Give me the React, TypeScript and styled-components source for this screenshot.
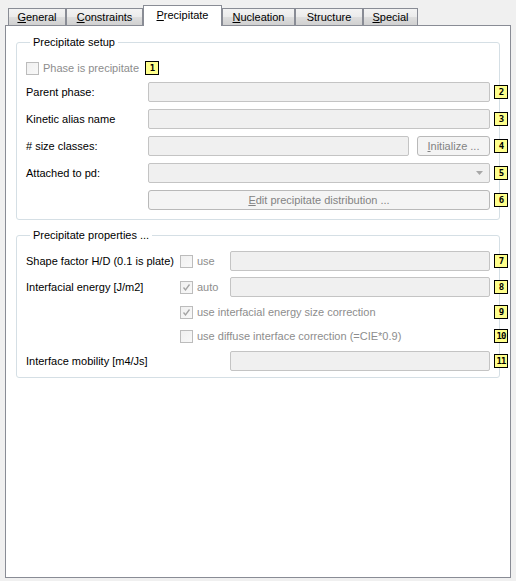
import React from "react";
import styled, { createGlobalStyle, css } from "styled-components";

const Global = createGlobalStyle`
  html, body {
    margin: 0;
    padding: 0;
    background: #f0f0f0;
  }
  body {
    font-family: "Liberation Sans", Arial, sans-serif;
    font-size: 11px;
    color: #000;
  }
  * { box-sizing: border-box; }
`;

const Window = styled.div`
  width: 516px;
  height: 581px;
  padding: 5px 5px 3px 5px;
  display: flex;
  flex-direction: column;
`;

const TabStrip = styled.div`
  display: flex;
  align-items: flex-end;
  height: 20px;
  padding-left: 3px;
  position: relative;
  z-index: 1;
`;

const Tab = styled.div<{ $active?: boolean; $w: number }>`
  width: ${(p) => p.$w}px;
  height: ${(p) => (p.$active ? 21 : 18)}px;
  margin-bottom: -1px;
  border: 1px solid #898c95;
  display: flex;
  justify-content: center;
  align-items: center;
  white-space: nowrap;
  ${(p) =>
    p.$active
      ? css`
          background: #fff;
          border-bottom: none;
          padding-bottom: 3px;
        `
      : css`
          background: linear-gradient(
            to bottom,
            #f3f3f3 0%,
            #ebebeb 50%,
            #dedede 51%,
            #d0d0d0 100%
          );
          padding-bottom: 1px;
        `}
`;

const Key = styled.span`
  text-decoration: underline;
  text-underline-offset: 1px;
`;

const Panel = styled.div`
  flex: 1;
  border: 1px solid #898c95;
  background: #fff;
  padding: 9px 10px 0 10px;
  display: flex;
  flex-direction: column;
`;

const Group = styled.fieldset<{ $top?: number; $pad: string }>`
  margin: ${(p) => p.$top ?? 0}px 0 0 0;
  padding: ${(p) => p.$pad};
  border: 1px solid #d5dfe5;
  border-radius: 3px;
  min-width: 0;
`;

const Legend = styled.legend`
  margin-left: 4px;
  padding: 0 3px;
  line-height: 14px;
  height: 14px;
`;

const Rows = styled.div<{ $gap: number }>`
  margin-right: -9px;
  display: flex;
  flex-direction: column;
  gap: ${(p) => p.$gap}px;
`;

const SetupRow = styled.div<{ $h?: number }>`
  display: grid;
  grid-template-columns: 118px 1fr 14px;
  column-gap: 4px;
  align-items: center;
  height: ${(p) => p.$h ?? 20}px;
`;

const InlineRow = styled.div`
  display: flex;
  align-items: center;
  height: 14px;
`;

const PropRow = styled.div<{ $h?: number }>`
  display: grid;
  grid-template-columns: 150px 46px 1fr 14px;
  column-gap: 4px;
  align-items: center;
  height: ${(p) => p.$h ?? 20}px;
`;

const Label = styled.span`
  white-space: nowrap;
  color: #000;
`;

const CheckLine = styled.label<{ $span?: string }>`
  display: flex;
  align-items: center;
  gap: 4px;
  white-space: nowrap;
  color: #8d8d8d;
  ${(p) => p.$span && `grid-column: ${p.$span};`}
`;

const Box = styled.span`
  width: 13px;
  height: 13px;
  flex: none;
  border: 1px solid #bcbcbc;
  background: linear-gradient(135deg, #f0f0f0, #f8f8f8);
  display: flex;
  align-items: center;
  justify-content: center;
`;

const Field = styled.div<{ $grow?: boolean }>`
  height: 20px;
  ${(p) => p.$grow && "flex: 1;"}
  border: 1px solid #c4c4c4;
  border-radius: 2px;
  background: #f0f0f0;
  display: flex;
  align-items: center;
  justify-content: flex-end;
`;

const FieldPair = styled.div`
  display: flex;
  gap: 8px;
  height: 20px;
`;

const Button = styled.div<{ $w?: number }>`
  ${(p) => (p.$w ? `width: ${p.$w}px; flex: none;` : "flex: 1;")}
  height: 20px;
  border: 1px solid #b9b9b9;
  border-radius: 3px;
  background: #f4f4f4;
  color: #838383;
  display: flex;
  align-items: center;
  justify-content: center;
  white-space: nowrap;
`;

const Badge = styled.span<{ $gapLeft?: number }>`
  width: 14px;
  height: 14px;
  flex: none;
  border: 1px solid #000;
  background: #ffff8c;
  color: #000;
  font-family: "DejaVu Sans Mono", monospace;
  font-weight: bold;
  font-size: 9px;
  letter-spacing: -1px;
  line-height: 12px;
  text-align: center;
  margin-left: ${(p) => p.$gapLeft ?? 0}px;
`;

const Arrow = styled.svg`
  margin-right: 6px;
`;

const Check = ({ on }: { on?: boolean }) => (
  <Box>
    {on && (
      <svg width="9" height="9" viewBox="0 0 9 9">
        <path d="M1.5 4.5 L3.5 7 L7.5 1.5" fill="none" stroke="#a3a3a3" strokeWidth="1.3" />
      </svg>
    )}
  </Box>
);

const tabs: { label: React.ReactNode; w: number; active?: boolean }[] = [
  { label: <><Key>G</Key>eneral</>, w: 58 },
  { label: <><Key>C</Key>onstraints</>, w: 77 },
  { label: <><Key>P</Key>recipitate</>, w: 79, active: true },
  { label: <><Key>N</Key>ucleation</>, w: 73 },
  { label: <>Structure</>, w: 68 },
  { label: <><Key>S</Key>pecial</>, w: 55 },
];

export default function App() {
  return (
    <>
      <Global />
      <Window>
        <TabStrip>
          {tabs.map((t, i) => (
            <Tab key={i} $w={t.w} $active={t.active}>
              {t.label}
            </Tab>
          ))}
        </TabStrip>
        <Panel>
          <Group $pad="12px 0 9px 9px">
            <Legend>Precipitate setup</Legend>
            <Rows $gap={7}>
              <InlineRow>
                <CheckLine>
                  <Check />
                  Phase is precipitate
                </CheckLine>
                <Badge $gapLeft={6}>1</Badge>
              </InlineRow>
              <SetupRow>
                <Label>Parent phase:</Label>
                <Field />
                <Badge>2</Badge>
              </SetupRow>
              <SetupRow>
                <Label>Kinetic alias name</Label>
                <Field />
                <Badge>3</Badge>
              </SetupRow>
              <SetupRow>
                <Label># size classes:</Label>
                <FieldPair>
                  <Field $grow />
                  <Button $w={73}>
                    <Key>I</Key>nitialize ...
                  </Button>
                </FieldPair>
                <Badge>4</Badge>
              </SetupRow>
              <SetupRow>
                <Label>Attached to pd:</Label>
                <Field>
                  <Arrow width="7" height="4" viewBox="0 0 7 4">
                    <path d="M0 0 H7 L3.5 4 Z" fill="#a7a7a7" />
                  </Arrow>
                </Field>
                <Badge>5</Badge>
              </SetupRow>
              <SetupRow>
                <span />
                <Button>
                  <Key>E</Key>dit precipitate distribution ...
                </Button>
                <Badge>6</Badge>
              </SetupRow>
            </Rows>
          </Group>

          <Group $top={8} $pad="9px 0 6px 9px">
            <Legend>Precipitate properties ...</Legend>
            <Rows $gap={6}>
              <PropRow>
                <Label>Shape factor H/D (0.1 is plate)</Label>
                <CheckLine>
                  <Check />
                  use
                </CheckLine>
                <Field />
                <Badge>7</Badge>
              </PropRow>
              <PropRow>
                <Label>Interfacial energy [J/m2]</Label>
                <CheckLine>
                  <Check on />
                  auto
                </CheckLine>
                <Field />
                <Badge>8</Badge>
              </PropRow>
              <PropRow $h={18}>
                <span />
                <CheckLine $span="2 / 4">
                  <Check on />
                  use interfacial energy size correction
                </CheckLine>
                <Badge>9</Badge>
              </PropRow>
              <PropRow $h={18}>
                <span />
                <CheckLine $span="2 / 4">
                  <Check />
                  use diffuse interface correction (=CIE*0.9)
                </CheckLine>
                <Badge>10</Badge>
              </PropRow>
              <PropRow>
                <Label>Interface mobility [m4/Js]</Label>
                <span />
                <Field />
                <Badge>11</Badge>
              </PropRow>
            </Rows>
          </Group>
        </Panel>
      </Window>
    </>
  );
}
